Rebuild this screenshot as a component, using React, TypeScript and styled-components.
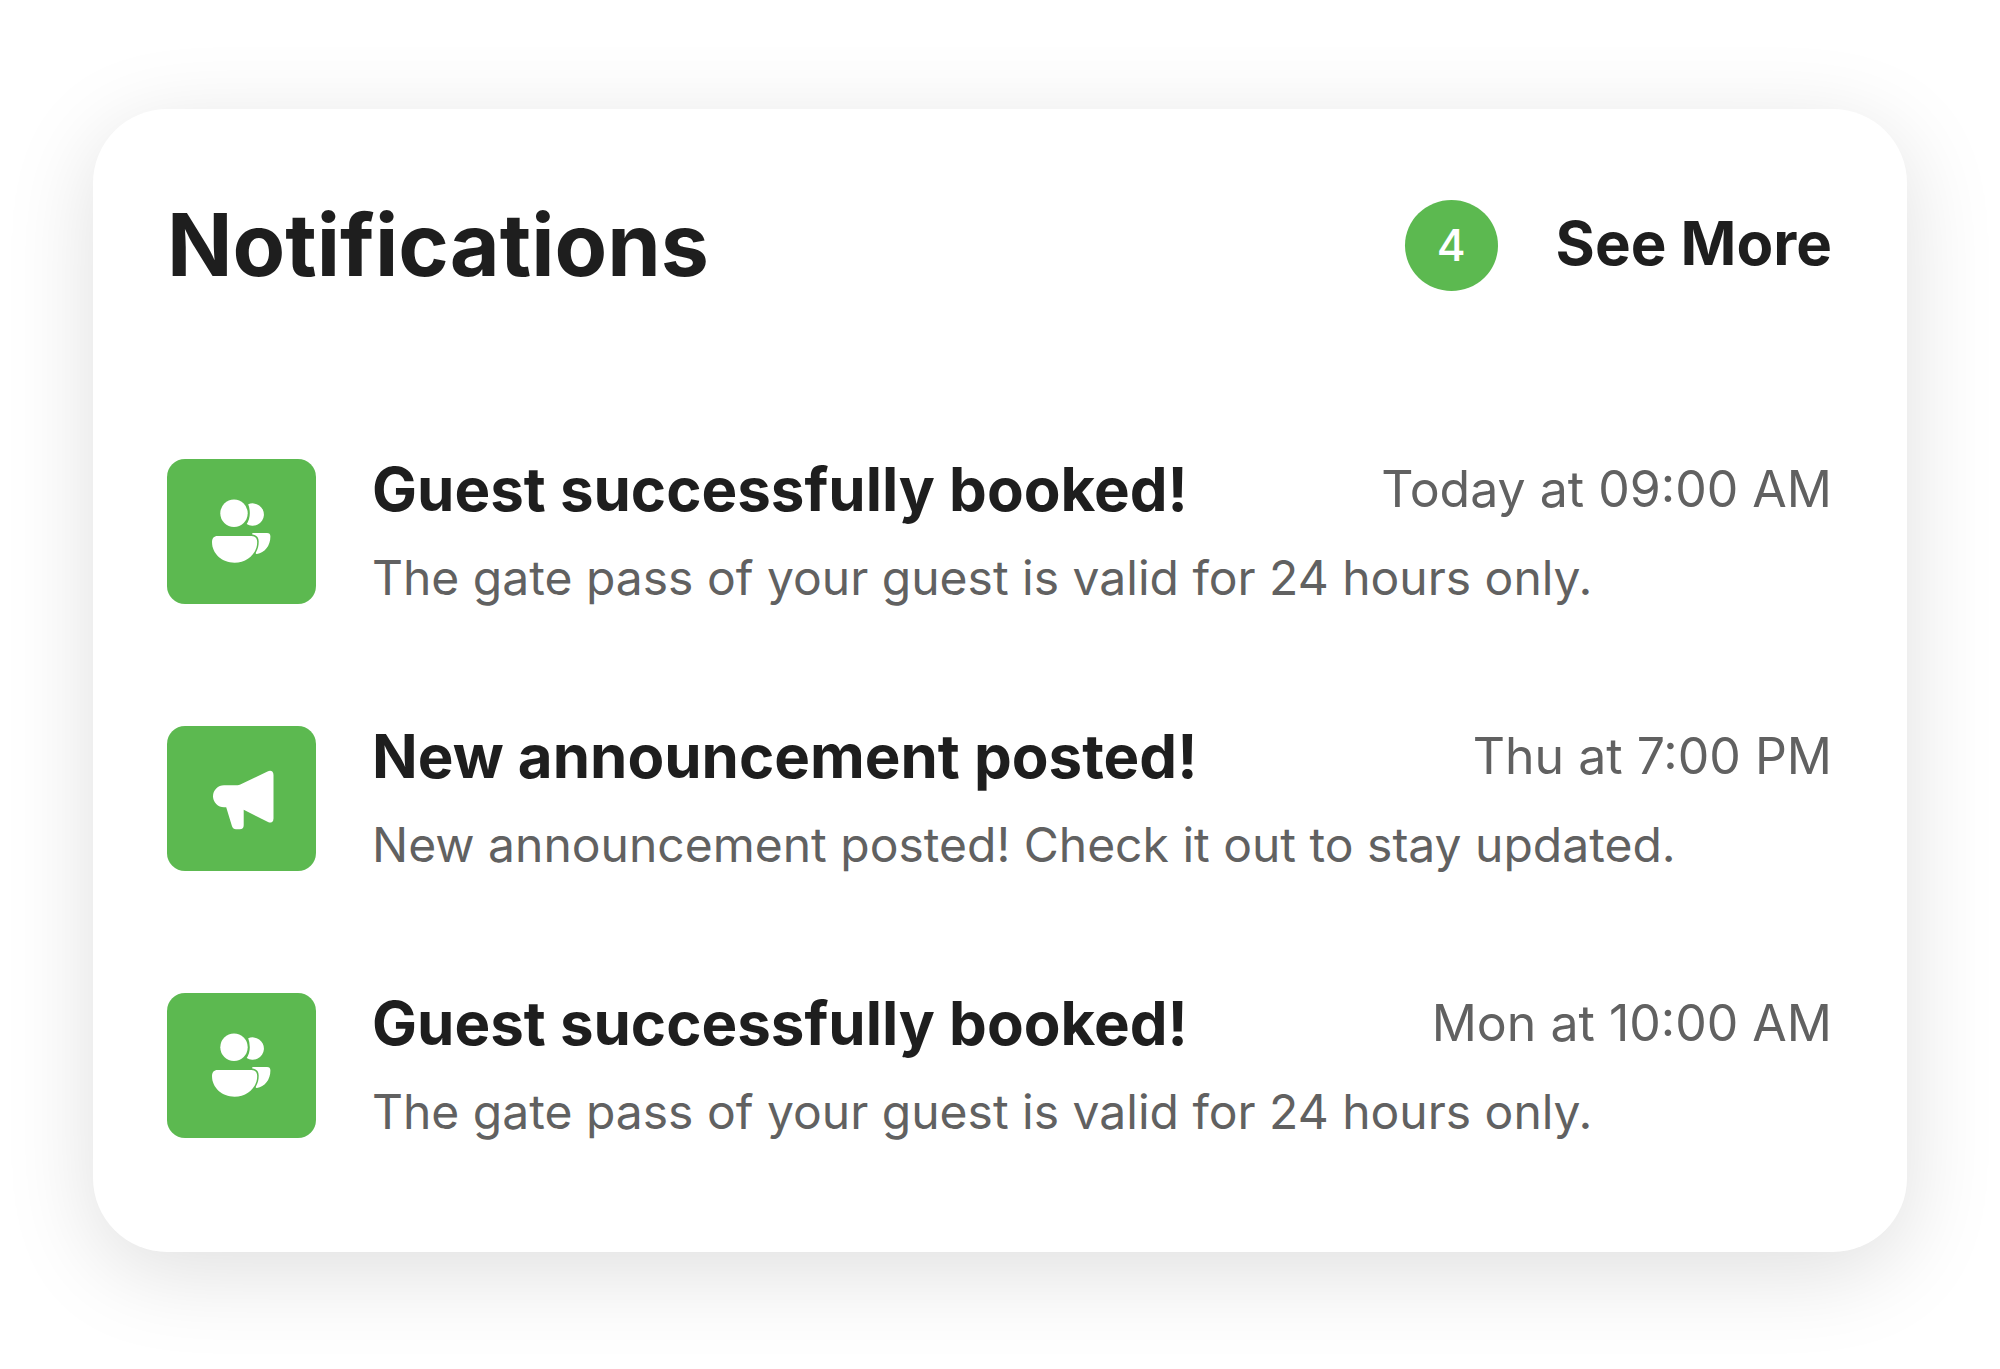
import React from "react";
import styled, { createGlobalStyle } from "styled-components";

const GlobalStyle = createGlobalStyle`
  * { box-sizing: border-box; }
  body {
    margin: 0;
    background: #ffffff;
    font-family: Inter, "Liberation Sans", sans-serif;
    color: #1e1e1e;
  }
`;

const Page = styled.main`
  padding: 109px 93px 117px;
`;

const Card = styled.section`
  padding: 90px 75px 109px 74px;
  border-radius: 74px;
  background: #ffffff;
  box-shadow: 0 20px 90px rgba(0, 0, 0, 0.13);
`;

const Header = styled.header`
  display: flex;
  align-items: center;
  justify-content: space-between;
  margin-bottom: 168px;
`;

const Heading = styled.h1`
  margin: 0;
  font-size: 86px;
  line-height: 92px;
  font-weight: 700;
`;

const HeaderActions = styled.div`
  display: flex;
  align-items: flex-start;
  gap: 58px;
`;

const Badge = styled.span`
  display: grid;
  place-items: center;
  width: 93px;
  height: 91px;
  border-radius: 50%;
  background: #5cb950;
  color: #ffffff;
  font-size: 44px;
  line-height: 48px;
  font-weight: 500;
`;

const SeeMore = styled.a`
  color: inherit;
  text-decoration: none;
  font-size: 60px;
  line-height: 86px;
  font-weight: 700;
`;

const List = styled.ul`
  display: grid;
  gap: 117px;
  margin: 0;
  padding: 0;
  list-style: none;
`;

const Item = styled.li`
  display: flex;
  align-items: flex-start;
  gap: 56px;
`;

const Tile = styled.span`
  flex: none;
  width: 149px;
  height: 145px;
  border-radius: 18px;
  background: #5cb950;

  svg {
    display: block;
    width: 100%;
    height: 100%;
    fill: #ffffff;
  }
`;

const Content = styled.div`
  flex: 1;
  min-width: 0;
`;

const TitleRow = styled.div`
  display: flex;
  align-items: center;
  justify-content: space-between;
  margin-bottom: 28px;
  white-space: nowrap;
`;

const Title = styled.h2`
  margin: 0;
  font-size: 60px;
  line-height: 60px;
  font-weight: 700;
`;

const Time = styled.time`
  color: #616161;
  font-size: 50px;
  line-height: 60px;
`;

const Message = styled.p`
  margin: 0;
  color: #616161;
  font-size: 48px;
  line-height: 62px;
  white-space: nowrap;
`;

const GuestsIcon = () => (
  <svg viewBox="0 0 149 145" aria-hidden="true">
    <circle cx="67" cy="54.3" r="13.7" />
    <path d="M81.2 45.3A11.2 11.2 0 1 1 79.7 65Q82.8 60.4 82.8 54.3Q82.8 49.2 81.2 45.3Z" />
    <path d="M50.5 77H84.5C88 77 90.2 79.3 90.2 83C90.2 94.5 80.3 103.7 67.5 103.7S45 94.5 45 83C45 79.3 47 77 50.5 77Z" />
    <path d="M86 74H100C102.3 74 103.4 75 103.4 77.5C103.4 87 97.5 93.8 90 95Q88.3 95.2 88.9 93.5C91 90 91.7 86.5 91.7 82.5C91.7 78.5 89.5 76 85.8 75.5Q84 75 86 74Z" />
  </svg>
);

const MegaphoneIcon = () => (
  <svg viewBox="0 0 149 145" aria-hidden="true">
    <path d="M57 59.3H70.5Q72 59.3 73.3 58.6L100.5 45.4Q103.5 44.2 105.3 45.5Q106.5 46.6 106.5 49V92.5Q106.5 95 105 96Q103.3 97 101 96L76.7 83.7V99.3Q76.7 103.3 72.7 103.3H69Q66 103.3 65 100.3L59.2 81.3H57A11 11 0 0 1 57 59.3Z" />
  </svg>
);

const notifications = [
  {
    id: 1,
    Icon: GuestsIcon,
    title: "Guest successfully booked!",
    time: "Today at 09:00 AM",
    message: "The gate pass of your guest is valid for 24 hours only.",
  },
  {
    id: 2,
    Icon: MegaphoneIcon,
    title: "New announcement posted!",
    time: "Thu at 7:00 PM",
    message: "New announcement posted! Check it out to stay updated.",
  },
  {
    id: 3,
    Icon: GuestsIcon,
    title: "Guest successfully booked!",
    time: "Mon at 10:00 AM",
    message: "The gate pass of your guest is valid for 24 hours only.",
  },
];

export default function App() {
  return (
    <>
      <GlobalStyle />
      <Page>
        <Card>
          <Header>
            <Heading>Notifications</Heading>
            <HeaderActions>
              <Badge>4</Badge>
              <SeeMore href="#notifications">See More</SeeMore>
            </HeaderActions>
          </Header>
          <List>
            {notifications.map(({ id, Icon, title, time, message }) => (
              <Item key={id}>
                <Tile>
                  <Icon />
                </Tile>
                <Content>
                  <TitleRow>
                    <Title>{title}</Title>
                    <Time>{time}</Time>
                  </TitleRow>
                  <Message>{message}</Message>
                </Content>
              </Item>
            ))}
          </List>
        </Card>
      </Page>
    </>
  );
}
